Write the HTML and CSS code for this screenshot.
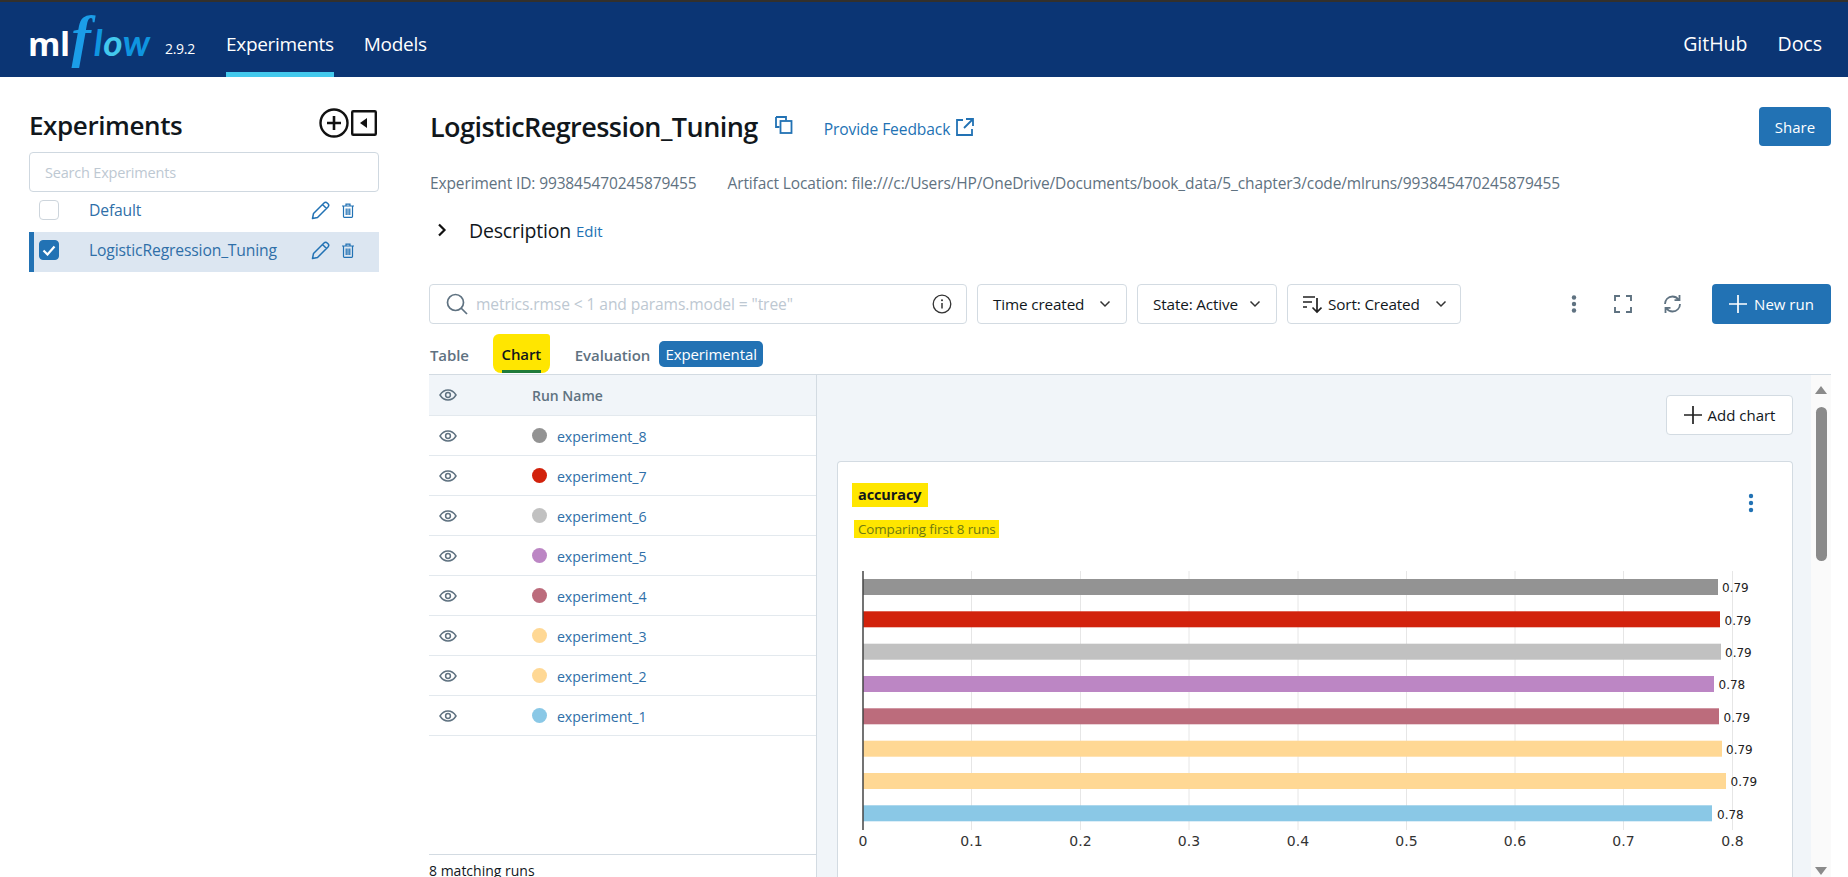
FILE: index.html
```html
<!DOCTYPE html>
<html lang="en">
<head>
<meta charset="utf-8">
<title>MLflow</title>
<link rel="stylesheet" href="styles.css">
</head>
<body>
<div class="page">
  <header class="topbar">
    <div class="logo"><span class="logo-ml">ml</span><span class="logo-f">f</span><span class="logo-low">l<span class="logo-o">o</span>w</span></div>
    <span class="version">2.9.2</span>
    <nav class="nav">
      <a class="nav-item active">Experiments</a>
      <a class="nav-item">Models</a>
    </nav>
    <nav class="nav-right">
      <a class="nav-plain">GitHub</a>
      <a class="nav-plain">Docs</a>
    </nav>
  </header>

  <div class="content">
    <aside class="sidebar">
      <div class="side-head">
        <h2 class="side-title">Experiments</h2>
        <div class="side-icons">
          <svg width="30" height="30" viewBox="0 0 30 30"><circle cx="15" cy="15" r="13.5" fill="none" stroke="#111" stroke-width="2.4"/><path d="M15 8v14M8 15h14" stroke="#111" stroke-width="2.6"/></svg>
          <svg width="26" height="26" viewBox="0 0 26 26"><rect x="1.2" y="1.2" width="23.6" height="23.6" rx="1" fill="none" stroke="#111" stroke-width="2.4"/><path d="M16 8v10l-7-5z" fill="#111"/></svg>
        </div>
      </div>
      <div class="side-search">Search Experiments</div>
      <div class="exp-row">
        <span class="check"></span>
        <a class="exp-name">Default</a>
        <svg class="ic-pen" width="19" height="19" viewBox="0 0 19 19"><path d="M1.5 17.5l1-5L13 2c1-1 2.3-1 3.2 0l.8.8c.9.9.9 2.2 0 3.2L6.500 16.500zM11.500 3.500l4 4" fill="none" stroke="#2272b4" stroke-width="1.500" stroke-linejoin="round"/></svg>
        <svg class="ic-trash" width="14" height="15" viewBox="0 0 14 15"><path d="M1 3h12M5 3V1.200h4V3M2.500 3v10.500c0 .5.300.8.800.8h7.400c.5 0 .8-.3.800-.8V3M5.200 5.500v6.500M7 5.500v6.500M8.800 5.500v6.500" fill="none" stroke="#2272b4" stroke-width="1.200"/></svg>
      </div>
      <div class="exp-row selected">
        <span class="check checked"><svg width="14" height="11" viewBox="0 0 14 11"><path d="M1.500 5.500l4 4 7-8" fill="none" stroke="#fff" stroke-width="2.200"/></svg></span>
        <a class="exp-name">LogisticRegression_Tuning</a>
        <svg class="ic-pen" width="19" height="19" viewBox="0 0 19 19"><path d="M1.500 17.500l1-5L13 2c1-1 2.300-1 3.200 0l.8.800c.9.9.9 2.200 0 3.200L6.500 16.500zM11.500 3.500l4 4" fill="none" stroke="#2272b4" stroke-width="1.500" stroke-linejoin="round"/></svg>
        <svg class="ic-trash" width="14" height="15" viewBox="0 0 14 15"><path d="M1 3h12M5 3V1.200h4V3M2.500 3v10.500c0 .5.300.8.800.8h7.400c.5 0 .8-.3.800-.8V3M5.200 5.500v6.500M7 5.500v6.500M8.800 5.500v6.500" fill="none" stroke="#2272b4" stroke-width="1.200"/></svg>
      </div>
    </aside>

    <main class="workspace">
      <div class="title-row">
        <h1 class="title">LogisticRegression_Tuning</h1>
        <svg class="ic-copy" width="18" height="18" viewBox="0 0 18 18"><path d="M1 1h10v3.500M1 1v10h3.500" fill="none" stroke="#2272b4" stroke-width="1.800"/><rect x="5.500" y="5" width="11" height="12" fill="none" stroke="#2272b4" stroke-width="1.800"/></svg>
        <a class="feedback">Provide Feedback</a>
        <svg class="ic-ext" width="20" height="20" viewBox="0 0 20 20"><path d="M8 3H2v15h15v-6M11 2h7v7M18 2L9 11" fill="none" stroke="#2272b4" stroke-width="1.800"/></svg>
        <button class="btn-primary share">Share</button>
      </div>
      <div class="meta">
        <span class="meta-id">Experiment ID: 993845470245879455</span>
        <span>Artifact Location: file:///c:/Users/HP/OneDrive/Documents/book_data/5_chapter3/code/mlruns/993845470245879455</span>
      </div>
      <div class="desc-row">
        <svg width="10" height="14" viewBox="0 0 10 14"><path d="M2 1.500L7.500 7 2 12.500" fill="none" stroke="#111" stroke-width="2.200"/></svg>
        <span class="desc">Description</span>
        <a class="desc-edit">Edit</a>
      </div>
      <div class="filters">
        <div class="run-search">
          <svg width="22" height="22" viewBox="0 0 22 22"><circle cx="9.500" cy="9.500" r="8" fill="none" stroke="#5f7281" stroke-width="1.700"/><path d="M15 15l6 6" stroke="#5f7281" stroke-width="1.700"/></svg>
          <span class="run-placeholder">metrics.rmse &lt; 1 and params.model = "tree"</span>
          <svg class="ic-info" width="20" height="20" viewBox="0 0 20 20"><circle cx="10" cy="10" r="8.800" fill="none" stroke="#333" stroke-width="1.300"/><path d="M10 9v5.500" stroke="#333" stroke-width="1.500"/><circle cx="10" cy="6.200" r="1" fill="#333"/></svg>
        </div>
        <button class="select s-time"><span class="select-label">Time created</span><svg width="12" height="8" viewBox="0 0 12 8"><path d="M1.500 1.500L6 6l4.500-4.500" fill="none" stroke="#333" stroke-width="1.500"/></svg></button>
        <button class="select s-state"><span class="select-label">State: Active</span><svg width="12" height="8" viewBox="0 0 12 8"><path d="M1.500 1.500L6 6l4.500-4.500" fill="none" stroke="#333" stroke-width="1.500"/></svg></button>
        <button class="select s-sort"><svg class="ic-sort" width="19" height="20" viewBox="0 0 19 20"><path d="M0 3h12M0 8h9M0 13h4M14 4v14M9.500 13.500L14 18l4.500-4.500" fill="none" stroke="#222" stroke-width="1.700"/></svg><span class="select-label">Sort: Created</span><svg width="12" height="8" viewBox="0 0 12 8"><path d="M1.500 1.500L6 6l4.500-4.500" fill="none" stroke="#333" stroke-width="1.500"/></svg></button>
        <div class="tools">
          <svg class="tool-kebab" width="6" height="18" viewBox="0 0 6 18"><circle cx="3" cy="2.500" r="2.200" fill="#5f7281"/><circle cx="3" cy="9" r="2.200" fill="#5f7281"/><circle cx="3" cy="15.500" r="2.200" fill="#5f7281"/></svg>
          <svg class="tool-full" width="18" height="18" viewBox="0 0 18 18"><path d="M1 6V1h5M12 1h5v5M17 12v5h-5M6 17H1v-5" fill="none" stroke="#5f7281" stroke-width="1.900"/></svg>
          <svg class="tool-refresh" width="19" height="18" viewBox="0 0 19 18"><path d="M2 9c0-4 3-7.500 7.500-7.500 2.500 0 4.500 1.100 6 3M17 9c0 4-3 7.500-7.500 7.500-2.500 0-4.500-1.100-6-3M16.500 0v5.200H11.500M2.500 18v-5.200H7.500" fill="none" stroke="#5f7281" stroke-width="1.800"/></svg>
        </div>
        <button class="btn-primary new-run"><svg width="18" height="18" viewBox="0 0 18 18"><path d="M9 0v18M0 9h18" stroke="#fff" stroke-width="1.700"/></svg>New run</button>
      </div>
      <div class="tabs">
        <span class="tab">Table</span>
        <span class="tab tab-chart"><span class="tab-mark">Chart</span></span>
        <span class="tab tab-eval">Evaluation</span>
        <span class="badge">Experimental</span>
      </div>

      <div class="split">
        <section class="runs">
          <div class="run-head">
            <svg class="eye" width="18" height="12" viewBox="0 0 18 12"><path d="M1 6c2-3.200 4.800-5 8-5s6 1.800 8 5c-2 3.200-4.800 5-8 5S3 9.200 1 6z" fill="none" stroke="#5f7281" stroke-width="1.500"/><circle cx="9" cy="6" r="2.400" fill="none" stroke="#5f7281" stroke-width="1.500"/></svg>
            <span class="run-head-name">Run Name</span>
          </div>
          <div class="run-row"><svg class="eye" width="18" height="12" viewBox="0 0 18 12"><path d="M1 6c2-3.200 4.800-5 8-5s6 1.800 8 5c-2 3.200-4.800 5-8 5S3 9.200 1 6z" fill="none" stroke="#5f7281" stroke-width="1.500"/><circle cx="9" cy="6" r="2.400" fill="none" stroke="#5f7281" stroke-width="1.500"/></svg><span class="dot c8"></span><a class="run-link">experiment_8</a></div>
          <div class="run-row"><svg class="eye" width="18" height="12" viewBox="0 0 18 12"><path d="M1 6c2-3.200 4.800-5 8-5s6 1.800 8 5c-2 3.200-4.800 5-8 5S3 9.200 1 6z" fill="none" stroke="#5f7281" stroke-width="1.500"/><circle cx="9" cy="6" r="2.400" fill="none" stroke="#5f7281" stroke-width="1.500"/></svg><span class="dot c7"></span><a class="run-link">experiment_7</a></div>
          <div class="run-row"><svg class="eye" width="18" height="12" viewBox="0 0 18 12"><path d="M1 6c2-3.200 4.800-5 8-5s6 1.800 8 5c-2 3.200-4.800 5-8 5S3 9.200 1 6z" fill="none" stroke="#5f7281" stroke-width="1.500"/><circle cx="9" cy="6" r="2.400" fill="none" stroke="#5f7281" stroke-width="1.500"/></svg><span class="dot c6"></span><a class="run-link">experiment_6</a></div>
          <div class="run-row"><svg class="eye" width="18" height="12" viewBox="0 0 18 12"><path d="M1 6c2-3.200 4.800-5 8-5s6 1.800 8 5c-2 3.200-4.800 5-8 5S3 9.200 1 6z" fill="none" stroke="#5f7281" stroke-width="1.500"/><circle cx="9" cy="6" r="2.400" fill="none" stroke="#5f7281" stroke-width="1.500"/></svg><span class="dot c5"></span><a class="run-link">experiment_5</a></div>
          <div class="run-row"><svg class="eye" width="18" height="12" viewBox="0 0 18 12"><path d="M1 6c2-3.200 4.800-5 8-5s6 1.800 8 5c-2 3.200-4.800 5-8 5S3 9.200 1 6z" fill="none" stroke="#5f7281" stroke-width="1.500"/><circle cx="9" cy="6" r="2.400" fill="none" stroke="#5f7281" stroke-width="1.500"/></svg><span class="dot c4"></span><a class="run-link">experiment_4</a></div>
          <div class="run-row"><svg class="eye" width="18" height="12" viewBox="0 0 18 12"><path d="M1 6c2-3.200 4.800-5 8-5s6 1.800 8 5c-2 3.200-4.800 5-8 5S3 9.200 1 6z" fill="none" stroke="#5f7281" stroke-width="1.500"/><circle cx="9" cy="6" r="2.400" fill="none" stroke="#5f7281" stroke-width="1.500"/></svg><span class="dot c3"></span><a class="run-link">experiment_3</a></div>
          <div class="run-row"><svg class="eye" width="18" height="12" viewBox="0 0 18 12"><path d="M1 6c2-3.200 4.800-5 8-5s6 1.800 8 5c-2 3.200-4.800 5-8 5S3 9.200 1 6z" fill="none" stroke="#5f7281" stroke-width="1.500"/><circle cx="9" cy="6" r="2.400" fill="none" stroke="#5f7281" stroke-width="1.500"/></svg><span class="dot c3"></span><a class="run-link">experiment_2</a></div>
          <div class="run-row"><svg class="eye" width="18" height="12" viewBox="0 0 18 12"><path d="M1 6c2-3.200 4.800-5 8-5s6 1.800 8 5c-2 3.200-4.800 5-8 5S3 9.200 1 6z" fill="none" stroke="#5f7281" stroke-width="1.500"/><circle cx="9" cy="6" r="2.400" fill="none" stroke="#5f7281" stroke-width="1.500"/></svg><span class="dot c1"></span><a class="run-link">experiment_1</a></div>
          <div class="run-foot">8 matching runs</div>
        </section>

        <section class="charts">
          <div class="charts-scroll">
            <div class="charts-bar">
              <button class="add-chart"><svg width="18" height="18" viewBox="0 0 18 18"><path d="M9 0v18M0 9h18" stroke="#222" stroke-width="1.700"/></svg>Add chart</button>
            </div>
            <div class="card">
              <div class="card-head">
                <div>
                  <div class="card-title"><span class="mark-title">accuracy</span></div>
                  <div class="card-sub"><span class="mark-sub">Comparing first 8 runs</span></div>
                </div>
                <svg class="card-menu" width="6" height="20" viewBox="0 0 6 20"><circle cx="3" cy="3" r="2.200" fill="#2272b4"/><circle cx="3" cy="10" r="2.200" fill="#2272b4"/><circle cx="3" cy="17" r="2.200" fill="#2272b4"/></svg>
              </div>
              <svg class="plot" width="954" height="300" viewBox="837 571 954 300">
                <g stroke="#e6e6e6" stroke-width="1">
                  <path d="M971.500 571V830M1080.500 571V830M1189 571V830M1298 571V830M1406.500 571V830M1515 571V830M1623.500 571V830M1732.500 571V830"/>
                </g>
                <rect class="c8f" x="863" y="579" width="855" height="16"/>
                <rect class="c7f" x="863" y="611.300" width="857" height="16"/>
                <rect class="c6f" x="863" y="643.700" width="858" height="16"/>
                <rect class="c5f" x="863" y="676" width="851" height="16"/>
                <rect class="c4f" x="863" y="708.300" width="856" height="16"/>
                <rect class="c3f" x="863" y="740.700" width="859" height="16"/>
                <rect class="c3f" x="863" y="773" width="863" height="16"/>
                <rect class="c1f" x="863" y="805.300" width="849" height="16"/>
                <path d="M863 571V830" stroke="#444" stroke-width="1.500"/>
                <g class="val">
                  <text x="1722" y="592">0.79</text>
                  <text x="1724.500" y="625">0.79</text>
                  <text x="1725" y="657">0.79</text>
                  <text x="1718.500" y="689">0.78</text>
                  <text x="1723.500" y="722">0.79</text>
                  <text x="1726" y="754">0.79</text>
                  <text x="1730.500" y="786">0.79</text>
                  <text x="1717" y="819">0.78</text>
                </g>
                <g class="tick">
                  <text x="863" y="846">0</text>
                  <text x="971.500" y="846">0.1</text>
                  <text x="1080.500" y="846">0.2</text>
                  <text x="1189" y="846">0.3</text>
                  <text x="1298" y="846">0.4</text>
                  <text x="1406.500" y="846">0.5</text>
                  <text x="1515" y="846">0.6</text>
                  <text x="1623.500" y="846">0.7</text>
                  <text x="1732.500" y="846">0.8</text>
                </g>
              </svg>
            </div>
          </div>
          <div class="scrollbar">
            <svg width="12" height="8" viewBox="0 0 12 8"><path d="M6 0l6 8H0z" fill="#8a8a8a"/></svg>
            <div class="thumb"></div>
            <svg class="arrow-down" width="12" height="8" viewBox="0 0 12 8"><path d="M0 0h12L6 8z" fill="#8a8a8a"/></svg>
          </div>
        </section>
      </div>
    </main>
  </div>
</div>
</body>
</html>
```

FILE: styles.css
```css
* { box-sizing: border-box; }
html, body { margin: 0; padding: 0; }
body { font-family: "Open Sans", "Noto Sans", sans-serif; color: #11171c; background: #fff; }
a { color: #2272b4; text-decoration: none; }
button { font-family: inherit; cursor: pointer; }
h1, h2 { margin: 0; }

.page { width: 1848px; height: 877px; display: flex; flex-direction: column; overflow: hidden; }

/* top bar */
.topbar { height: 77px; flex: none; background: #0b3574; border-top: 2px solid #33302c; display: flex; align-items: stretch; padding-left: 28px; padding-right: 26px; color: #fff; }
.logo { width: 132px; display: flex; align-items: baseline; line-height: 48px; height: 48px; margin-top: 11px; }
.logo-ml { font-weight: 700; color: #fff; font-size: 33px; letter-spacing: -.5px; }
.logo-f { font-family: "Liberation Serif", serif; font-style: italic; font-weight: 700; color: #1b9de8; font-size: 58px; margin-left: 2px; margin-right: 3px; line-height: 48px; }
.logo-low { font-family: "Lato", sans-serif; font-style: italic; font-weight: 700; color: #0f95e0; font-size: 37px; letter-spacing: .5px; }
.logo-o { color: #43c9ed; }
.version { font-size: 14px; letter-spacing: -.3px; align-self: flex-start; margin-top: 37px; margin-left: 5px; width: 61px; }
.nav { display: flex; gap: 30px; }
.nav-item { color: #fff; font-size: 19px; letter-spacing: -.3px; display: flex; align-items: center; padding-top: 13px; border-bottom: 5px solid transparent; height: 75px; }
.nav-item.active { border-bottom-color: #43c9ed; }
.nav-right { margin-left: auto; display: flex; gap: 30px; align-items: center; padding-top: 13px; padding-bottom: 5px; }
.nav-plain { color: #fff; font-size: 19.500px; }

/* layout */
.content { flex: 1; display: flex; min-height: 0; }
.sidebar { width: 429px; flex: none; padding-left: 29px; padding-right: 50px; }
.side-head { height: 75px; display: flex; align-items: flex-end; justify-content: space-between; padding-bottom: 5px; padding-right: 2px; }
.side-title { font-size: 26px; font-weight: 600; letter-spacing: -.4px; line-height: 40px; margin-bottom: 2px; }
.side-icons { display: flex; align-items: center; gap: 2px; margin-bottom: 9px; }
.side-search { height: 40px; border: 1px solid #cfd8e0; border-radius: 4px; padding-left: 15px; display: flex; align-items: center; color: #bdc8d2; font-size: 14.500px; letter-spacing: -.2px; padding-top: 1px; }
.exp-row { height: 40px; display: flex; align-items: center; padding-left: 10px; padding-bottom: 4px; }
.exp-row.selected { background: #dce6f1; border-left: 5px solid #2272b4; padding-left: 5px; }
.check { width: 20px; height: 20px; flex: none; border: 1px solid #cdd5dc; border-radius: 4px; background: #fff; display: flex; align-items: center; justify-content: center; }
.check.checked { background: #2272b4; border-color: #2272b4; }
.exp-name { font-size: 15.700px; letter-spacing: -.15px; margin-left: 30px; flex: 1; color: #2f6fa8; }
.ic-pen { margin-right: 11px; }
.ic-trash { margin-right: 24px; }

.workspace { flex: 1; min-width: 0; padding-right: 17px; display: flex; flex-direction: column; }
.title-row { height: 39px; margin-top: 30px; display: flex; align-items: center; flex: none; }
.title { font-size: 27px; font-weight: 600; letter-spacing: -.55px; line-height: 1; padding-left: 1px; }
.ic-copy { margin-left: 17px; margin-top: -3px; }
.feedback { margin-left: 31px; font-size: 15.600px; letter-spacing: -.1px; margin-top: 5px; }
.ic-ext { margin-left: 5px; margin-top: 1px; }
.btn-primary { background: #2272b4; color: #fff; border: none; border-radius: 4px; font-size: 15px; }
.share { margin-left: auto; width: 72px; height: 39px; }
.meta { height: 24px; margin-top: 25px; flex: none; display: flex; font-size: 15.500px; letter-spacing: -.12px; color: #5f7281; padding-left: 1px; line-height: 24px; white-space: nowrap; }
.meta-id { margin-right: 31px; }
.desc-row { height: 32px; margin-top: 19px; flex: none; display: flex; align-items: center; padding-left: 8px; }
.desc { font-size: 19.500px; letter-spacing: -.2px; margin-left: 22px; }
.desc-edit { font-size: 15px; margin-left: 5px; padding-top: 2px; }

.filters { height: 40px; margin-top: 38px; flex: none; display: flex; align-items: center; gap: 10px; }
.run-search { width: 538px; height: 40px; border: 1px solid #d3dbe2; border-radius: 4px; display: flex; align-items: center; padding-left: 16px; padding-right: 14px; }
.run-placeholder { color: #bdc8d2; font-size: 15.600px; letter-spacing: -.1px; margin-left: 8px; flex: 1; white-space: nowrap; }
.select { height: 40px; background: #fff; border: 1px solid #d3dbe2; border-radius: 4px; font-size: 15.300px; letter-spacing: -.15px; color: #11171c; display: flex; align-items: center; padding: 0 15px; white-space: nowrap; }
.select-label { flex: 1; text-align: left; }
.s-time { width: 150px; }
.s-state { width: 140px; }
.s-sort { width: 174px; padding-right: 13px; }
.ic-sort { margin-right: 6px; flex: none; }
.tools { margin-left: auto; margin-right: 20px; display: flex; align-items: center; }
.tool-full { margin-left: 37px; }
.tool-refresh { margin-left: 31px; }
.new-run { width: 119px; height: 40px; display: flex; align-items: center; justify-content: center; gap: 7px; flex: none; }

.tabs { height: 50px; flex: none; display: flex; align-items: flex-end; font-size: 15px; font-weight: 600; color: #5f7281; padding-top: 10px; }
.tab { height: 40px; display: flex; align-items: center; letter-spacing: -.1px; padding-left: 1px; padding-top: 1px; }
.tab-chart { margin-left: 24px; color: #11171c; background: #ffe600; border-radius: 6px 3px 8px 8px; width: 57px; justify-content: center; padding: 0; height: 39px; margin-bottom: 1px; }
.tab-mark { height: 39px; display: flex; align-items: center; border-bottom: 3px solid #1f7a3a; padding-top: 4px; }
.tab-eval { margin-left: 24px; }
.badge { background: #2272b4; color: #fff; font-weight: 400; font-size: 15px; letter-spacing: -.1px; height: 26px; width: 104px; margin-left: 9px; margin-bottom: 7px; border-radius: 5px; display: flex; align-items: center; justify-content: center; }

.split { flex: 1; min-height: 0; display: flex; border-top: 1px solid #d3dbe2; }
.runs { width: 388px; flex: none; display: flex; flex-direction: column; border-right: 1px solid #d3dbe2; }
.run-head { height: 41px; flex: none; background: #f1f5f9; border-bottom: 1px solid #e3e9ee; display: flex; align-items: center; padding-left: 10px; }
.run-head-name { font-size: 14px; font-weight: 600; color: #5f7281; margin-left: 75px; }
.run-row { height: 40px; flex: none; border-bottom: 1px solid #e3e9ee; display: flex; align-items: center; padding-left: 10px; }
.eye { flex: none; }
.dot { width: 15px; height: 15px; border-radius: 50%; flex: none; margin-left: 75px; }
.run-link { margin-left: 10px; font-size: 14.200px; letter-spacing: -.1px; color: #2f6fa8; padding-top: 2px; }
.c8 { background: #939393; } .c7 { background: #d2220c; } .c6 { background: #c1c1c1; }
.c5 { background: #bc86c4; } .c4 { background: #bc6c7c; } .c3 { background: #ffd894; } .c1 { background: #8ac8e6; }
.c8f { fill: #939393; } .c7f { fill: #d2220c; } .c6f { fill: #c1c1c1; }
.c5f { fill: #bc86c4; } .c4f { fill: #bc6c7c; } .c3f { fill: #ffd894; } .c1f { fill: #8ac8e6; }
.run-foot { margin-top: auto; height: 23px; border-top: 1px solid #d3dbe2; font-size: 14px; padding-top: 7px; line-height: 18px; white-space: nowrap; }

.charts { flex: 1; min-width: 0; display: flex; background: #f1f5f9; }
.charts-scroll { flex: 1; min-width: 0; padding-left: 20px; padding-right: 18px; display: flex; flex-direction: column; }
.charts-bar { height: 86px; flex: none; display: flex; justify-content: flex-end; align-items: flex-start; padding-top: 20px; }
.add-chart { width: 127px; height: 40px; background: #fff; border: 1px solid #d3dbe2; border-radius: 4px; font-size: 15px; color: #11171c; display: flex; align-items: center; justify-content: center; gap: 6px; }
.card { flex: 1; background: #fff; border: 1px solid #d3dbe2; border-bottom: 0; border-radius: 4px 4px 0 0; overflow: hidden; }
.card-head { height: 109px; display: flex; justify-content: space-between; align-items: flex-start; padding: 20px 38px 0 14px; }
.card-title { font-size: 14.500px; font-weight: 700; height: 26px; display: flex; align-items: center; letter-spacing: -.1px; }
.mark-title { background: #ffe600; padding: 2px 7px 3px 6px; }
.card-sub { font-size: 13.400px; margin-top: 12px; letter-spacing: -.1px; padding-left: 2px; }
.mark-sub { background: #ffe600; color: #6f7a10; padding: 0 3px 0 4px; }
.card-menu { margin-top: 11px; }
.plot { display: block; margin-left: -1px; }
.val text { font-family: "DejaVu Sans", sans-serif; font-size: 12px; fill: #222; }
.tick text { font-family: "DejaVu Sans", sans-serif; font-size: 14px; fill: #333; text-anchor: middle; }

.scrollbar { width: 20px; flex: none; background: #fafafa; display: flex; flex-direction: column; align-items: center; padding-top: 11px; padding-bottom: 2px; }
.thumb { width: 11px; height: 154px; background: #8a8a8a; border-radius: 6px; margin-top: 13px; }
.arrow-down { margin-top: auto; }
```
